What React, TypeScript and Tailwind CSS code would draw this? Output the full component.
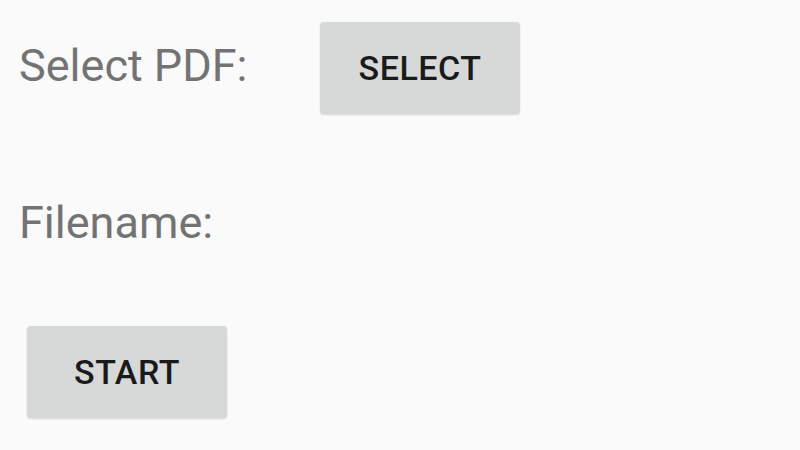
const App = () => {
  return (
    <div className="w-[800px] h-[450px] bg-[#fafafa] pl-[19px] pt-[22px] font-['Roboto',sans-serif]">
      <div className="flex items-center">
        <span className="w-[301px] text-[45px] leading-none text-[#737373] -mt-[6px]">
          Select PDF:
        </span>
        <button className="w-[200px] h-[92px] rounded-[4px] bg-[#d7d8d8] shadow-[0_1px_2px_rgba(0,0,0,0.15)] text-[34px] font-medium text-[#1a1a1a] tracking-[0.5px]">
          SELECT
        </button>
      </div>
      <p className="mt-[86px] text-[45px] leading-none text-[#737373]">
        Filename:
      </p>
      <button className="mt-[81px] ml-[8px] w-[200px] h-[92px] rounded-[4px] bg-[#d7d8d8] shadow-[0_1px_2px_rgba(0,0,0,0.15)] text-[34px] font-medium text-[#1a1a1a] tracking-[0.5px]">
        START
      </button>
    </div>
  );
};

export default App;
